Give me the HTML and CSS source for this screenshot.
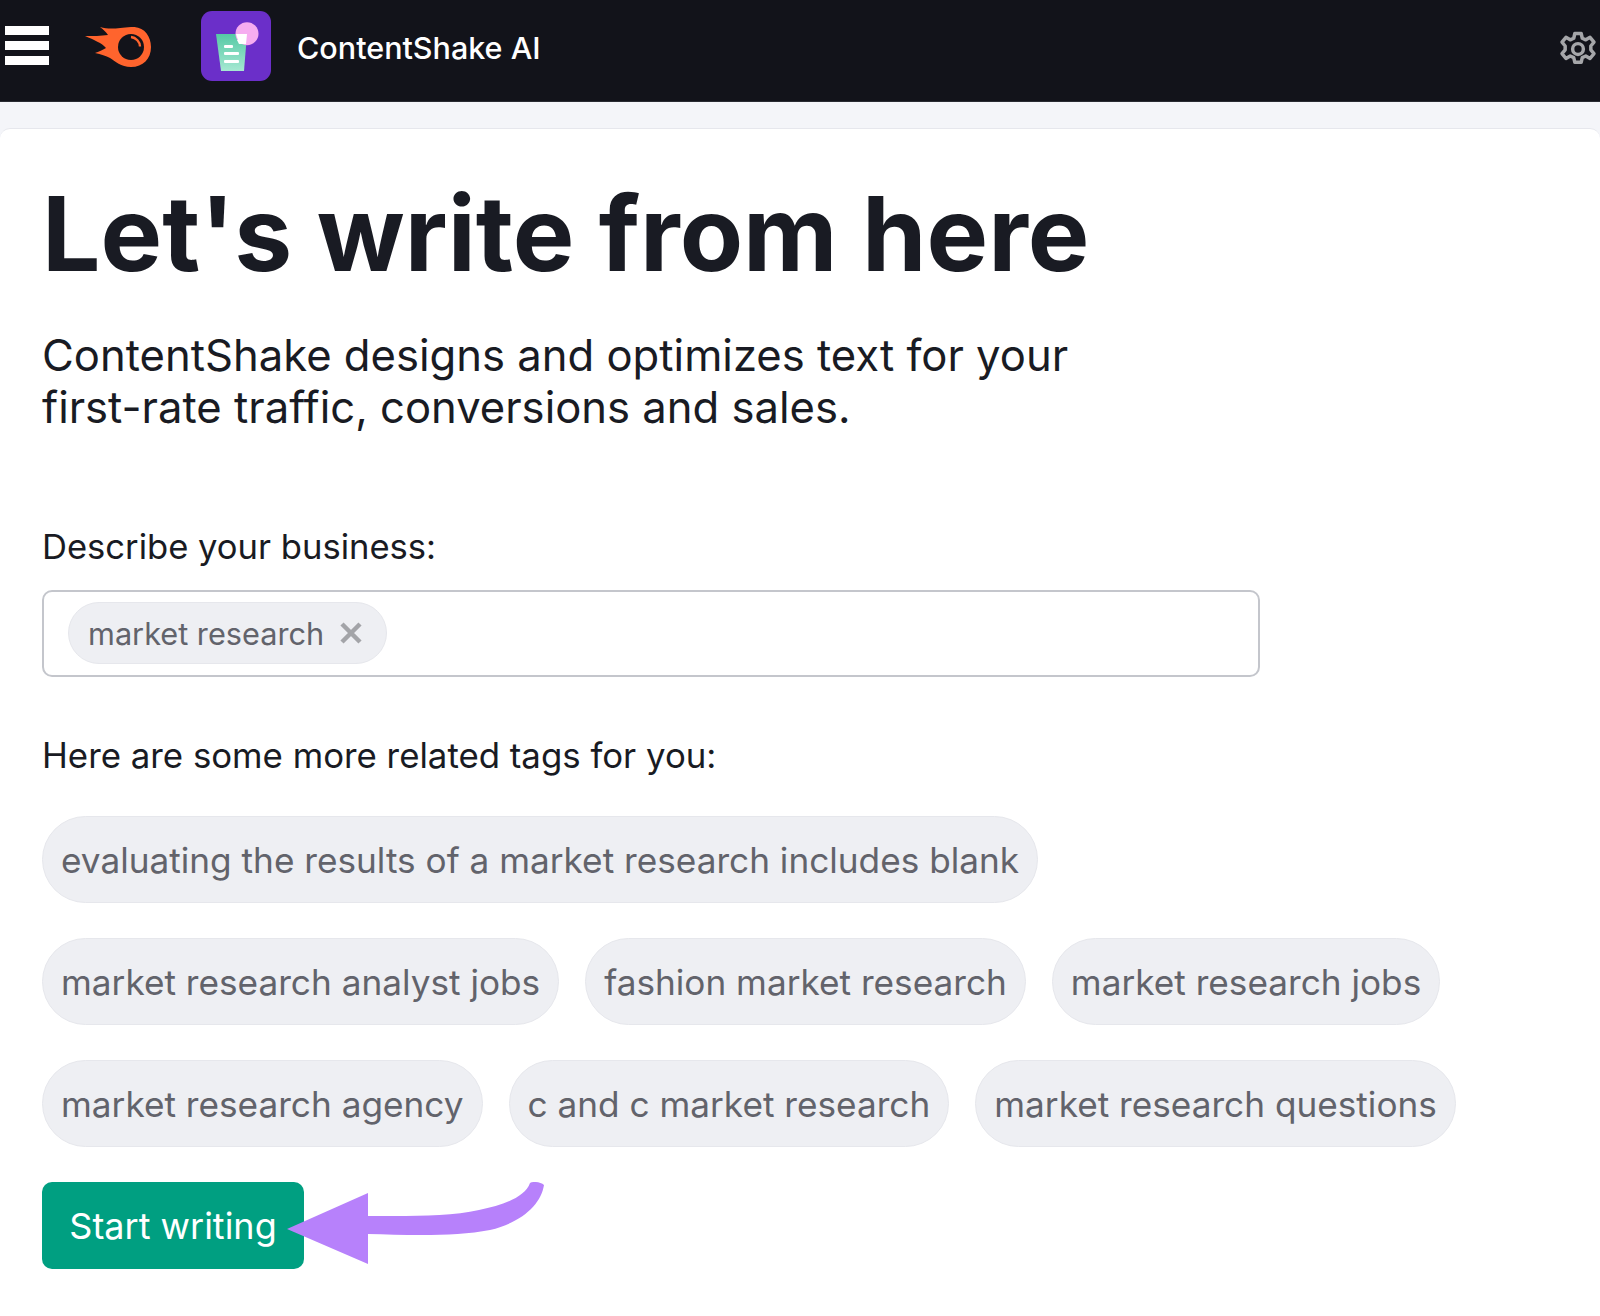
FILE: index.html
```html
<!DOCTYPE html>
<html lang="en">
<head>
<meta charset="utf-8">
<title>ContentShake AI</title>
<link rel="stylesheet" href="styles.css">
</head>
<body>
<header class="topbar">
  <div class="burger"><span></span><span></span><span></span></div>
  <svg class="logo" viewBox="85 28 67 41" aria-hidden="true">
    <path fill="#ff642d" d="M100 28C110 31 118 29 131 28C143 27 151 36 151 48C151 60 143 68 131 68C121 68 115 62 110 59C106 57 101 55 95 54C100 52 103 51 106 49C102 44 94 41 85 37C93 37 101 37 108 36C106 33 103 30 100 28Z"/>
    <circle cx="131" cy="48" r="13" fill="#12131a"/>
    <path fill="none" stroke="#ff642d" stroke-width="2.4" d="M131 38C136 38.5 140 43 140 47.5"/>
  </svg>
  <svg class="appicon" viewBox="0 0 70 70" aria-hidden="true">
    <defs>
      <linearGradient id="cup" x1="0" y1="0" x2="0" y2="1">
        <stop offset="0" stop-color="#55c9a5"/>
        <stop offset="1" stop-color="#a6e8d2"/>
      </linearGradient>
    </defs>
    <rect width="70" height="70" rx="11" fill="#6b2fc9"/>
    <path fill="url(#cup)" d="M15 23H46L43 60H20Z"/>
    <circle cx="46" cy="22.700" r="11.500" fill="#f6acf0"/>
    <path fill="#fff" d="M35 23H46L45 33H38L36 29H37Z"/>
    <rect x="23" y="34" width="9" height="3" rx="1" fill="#fff"/>
    <rect x="23" y="41" width="15" height="3" rx="1" fill="#fff"/>
    <rect x="23" y="49" width="15" height="3" rx="1" fill="#fff"/>
  </svg>
  <span class="apptitle">ContentShake AI</span>
  <svg class="gear" viewBox="0 0 24 24" aria-hidden="true">
    <path fill="none" stroke="#a5a6a9" stroke-width="2.2" stroke-linejoin="round" d="M10 2.2h4l.7 3 2.2 1 2.7-1.600 2.500 3.100-2 2.400v2.400l2 2.400-2.500 3.100-2.700-1.600-2.200 1-.7 3h-4l-.7-3-2.200-1-2.700 1.600-2.500-3.100 2-2.400v-2.400l-2-2.400 2.500-3.100 2.700 1.600 2.200-1z"/>
    <circle cx="12" cy="12" r="3.400" fill="none" stroke="#a5a6a9" stroke-width="2.200"/>
  </svg>
</header>
<div class="strip"></div>
<main class="panel">
  <h1 class="headline">Let's write from here</h1>
  <p class="intro">ContentShake designs and optimizes text for your<br>first-rate traffic, conversions and sales.</p>
  <label class="label label-business">Describe your business:</label>
  <div class="tagbox">
    <span class="picked">market research
      <svg class="close" viewBox="0 0 24 24" aria-hidden="true"><path d="M3 3L21 21M21 3L3 21" stroke="#a3a4a8" stroke-width="4.500" fill="none"/></svg>
    </span>
  </div>
  <p class="label label-related">Here are some more related tags for you:</p>
  <div class="chips">
    <div class="chip-row">
      <span class="chip">evaluating the results of a market research includes blank</span>
    </div>
    <div class="chip-row">
      <span class="chip">market research analyst jobs</span>
      <span class="chip">fashion market research</span>
      <span class="chip">market research jobs</span>
    </div>
    <div class="chip-row">
      <span class="chip">market research agency</span>
      <span class="chip">c and c market research</span>
      <span class="chip">market research questions</span>
    </div>
  </div>
  <div class="action">
    <button class="start">Start writing</button>
    <svg class="arrow" viewBox="0 0 260 90" aria-hidden="true">
      <path fill="#b781fb" d="M0 47L81 11V34C120 34 162 35 192 28C217 23 238 15 243 1C246 -1 254 0 257 3C254 22 236 40 203 48C168 55 120 53 81 52V82Z"/>
    </svg>
  </div>
</main>
</body>
</html>
```
FILE: styles.css
```css
* { box-sizing: border-box; }
html, body { margin: 0; padding: 0; }
body {
  width: 1600px;
  height: 1316px;
  overflow: hidden;
  background: #f4f5f9;
  font-family: Inter, "Liberation Sans", sans-serif;
  color: #191b23;
}
.topbar {
  height: 102px;
  background: #12131a;
  display: flex;
  align-items: center;
  padding-left: 5px;
  border-bottom: 1px solid #2a2c33;
}
.burger {
  width: 44px;
  display: flex;
  flex-direction: column;
  gap: 6px;
  margin-top: -11px;
}
.burger span { height: 9px; background: #fff; }
.logo { width: 67px; height: 41px; margin-left: 36px; margin-top: -6px; }
.appicon { width: 70px; height: 70px; margin-left: 49px; margin-top: -10px; }
.apptitle {
  margin-left: 26px;
  margin-top: -7px;
  font-size: 30.500px;
  font-weight: 500;
  color: #fff;
}
.gear { width: 38px; height: 38px; margin-left: auto; margin-right: 3px; margin-top: -4px; }
.strip { height: 26px; background: #f4f5f9; }
.panel {
  height: 1188px;
  background: #fff;
  border-top: 1px solid #e6e7ed;
  border-radius: 10px 10px 0 0;
  padding: 45px 0 0 42px;
}
.headline {
  margin: 0;
  font-size: 103.500px;
  line-height: 120px;
  font-weight: 700;
}
.intro {
  margin: 36px 0 0;
  font-size: 43.600px;
  line-height: 52px;
  font-weight: 400;
}
.label { display: block; font-size: 34.600px; line-height: 40px; }
.label-business { margin-top: 92px; }
.label-related { margin: 58px 0 0; font-size: 34.800px; }
.tagbox {
  width: 1218px;
  height: 87px;
  margin-top: 24px;
  border: 2px solid #c4c6cc;
  border-radius: 10px;
  padding: 10px 0 0 24px;
}
.picked {
  display: inline-flex;
  align-items: center;
  gap: 15px;
  height: 62px;
  padding: 0 23px 0 19px;
  background: #eeeff3;
  border: 1px solid #e6e7ec;
  border-radius: 31px;
  font-size: 30.700px;
  color: #62636b;
}
.close { width: 24px; height: 24px; }
.chips {
  display: flex;
  flex-direction: column;
  gap: 35px;
  margin-top: 41px;
}
.chip-row { display: flex; gap: 26px; }
.chip {
  height: 87px;
  display: inline-flex;
  align-items: center;
  padding: 0 18px;
  background: #eeeff3;
  border: 1px solid #e6e7ec;
  border-radius: 44px;
  font-size: 35.200px;
  color: #62636b;
}
.action { position: relative; margin-top: 35px; }
.start {
  display: block;
  width: 262px;
  height: 87px;
  border: 0;
  border-radius: 10px;
  background: #009f81;
  color: #fff;
  font-family: inherit;
  font-size: 36px;
}
.arrow {
  position: absolute;
  left: 245px;
  top: 0;
  width: 260px;
  height: 90px;
}
```
